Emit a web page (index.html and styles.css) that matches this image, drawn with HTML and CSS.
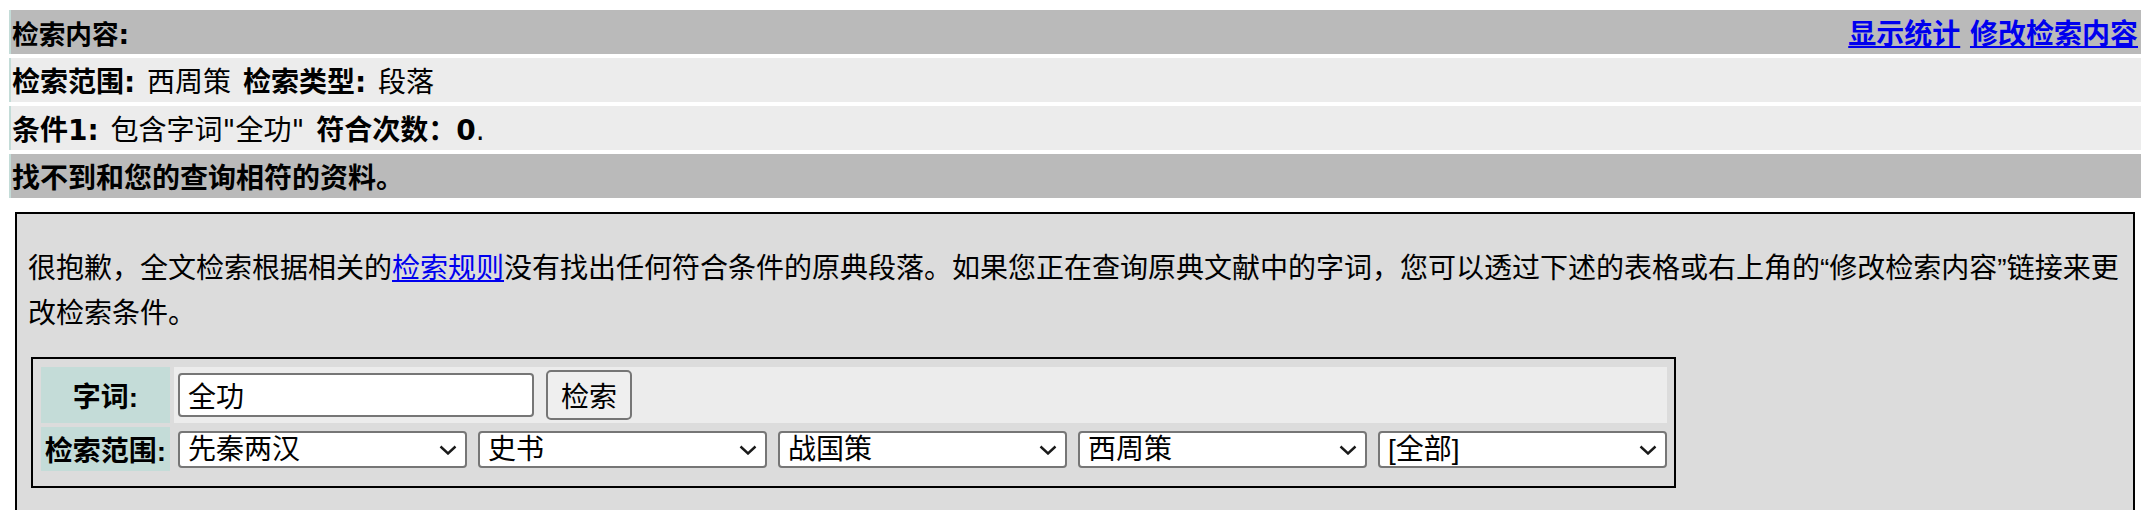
FILE: index.html
```html
<!DOCTYPE html>
<html lang="zh-CN">
<head>
<meta charset="utf-8">
<title>检索结果</title>
<link rel="stylesheet" href="styles.css">
</head>
<body>
<div class="page">
  <div class="bars">
    <div class="bar dark">
      <b class="title">检索内容:</b>
      <span class="links"><a href="#">显示统计</a> <a href="#">修改检索内容</a></span>
    </div>
    <div class="bar light"><span><b>检索范围:</b> 西周策 <b>检索类型:</b> 段落</span></div>
    <div class="bar light"><span><b>条件1:</b> 包含字词"全功" <b>符合次数：</b><b class="num">0</b>.</span></div>
    <div class="bar dark"><b>找不到和您的查询相符的资料。</b></div>
  </div>
  <div class="box">
    <p class="msg">很抱歉，全文检索根据相关的<a href="#">检索规则</a>没有找出任何符合条件的原典段落。如果您正在查询原典文献中的字词，您可以透过下述的表格或右上角的“修改检索内容”链接来更改检索条件。</p>
    <div class="form">
      <div class="label">字词:</div>
      <div class="cell first">
        <input class="word" type="text" value="全功">
        <button class="btn" type="button">检索</button>
      </div>
      <div class="label">检索范围:</div>
      <div class="cell second">
        <span class="sel"><select><option>先秦两汉</option></select><svg class="chev" viewBox="0 0 18 10" width="18" height="10"><polyline points="1.5,1.5 9,8.5 16.5,1.5"/></svg></span>
        <span class="sel"><select><option>史书</option></select><svg class="chev" viewBox="0 0 18 10" width="18" height="10"><polyline points="1.5,1.5 9,8.5 16.5,1.5"/></svg></span>
        <span class="sel"><select><option>战国策</option></select><svg class="chev" viewBox="0 0 18 10" width="18" height="10"><polyline points="1.5,1.5 9,8.5 16.5,1.5"/></svg></span>
        <span class="sel"><select><option>西周策</option></select><svg class="chev" viewBox="0 0 18 10" width="18" height="10"><polyline points="1.5,1.5 9,8.5 16.5,1.5"/></svg></span>
        <span class="sel"><select><option>[全部]</option></select><svg class="chev" viewBox="0 0 18 10" width="18" height="10"><polyline points="1.5,1.5 9,8.5 16.5,1.5"/></svg></span>
      </div>
    </div>
  </div>
</div>
</body>
</html>
```

FILE: styles.css
```css
html, body {
  margin: 0;
  padding: 0;
  background: #ffffff;
  overflow: hidden;
}

body {
  font-family: "Liberation Sans", "Noto Sans CJK SC", sans-serif;
  color: #000;
}

.page {
  padding: 10px 4px 0 9px;
}

.bars {
  display: flex;
  flex-direction: column;
  gap: 4px;
}

.bar {
  display: flex;
  align-items: center;
  height: 44px;
  border-left: 2px solid #c4dcd8;
  padding: 0 3px 0 1px;
  font-family: "DejaVu Sans", "Noto Sans CJK SC", sans-serif;
  font-size: 28px;
  white-space: nowrap;
}

.bar.dark {
  background: #bababa;
}

.bar.light {
  background: #ececec;
  word-spacing: 3px;
}

.bar .title {
  font-size: 26.67px;
}

.links {
  margin-left: auto;
  font-size: 28px;
  font-weight: bold;
}

a {
  color: #0000ee;
  text-decoration: underline;
}

.box {
  margin: 14px 6px 0 6px;
  border: 2px solid #000;
  background: #dcdcdc;
  min-height: 320px;
  padding-top: 32px;
}

.msg {
  margin: 0;
  padding: 0 4px 0 11px;
  font-size: 28px;
  line-height: 45px;
}

.form {
  margin: 21px 0 0 14px;
  width: 1645px;
  box-sizing: border-box;
  border: 2px solid #000;
  padding: 8px 8px 15px 8px;
  display: grid;
  grid-template-columns: 129px 1fr;
  grid-template-rows: 56px 44px;
  gap: 4px;
}

.label {
  background: #c4dcd8;
  font-size: 28px;
  font-weight: bold;
  display: flex;
  align-items: center;
  justify-content: center;
  white-space: nowrap;
}

.cell {
  display: flex;
  align-items: center;
  padding-left: 4px;
}

.cell.first {
  background: #ececec;
  gap: 12px;
}

.cell.second {
  gap: 11px;
}

.word {
  width: 356px;
  height: 44px;
  box-sizing: border-box;
  border: 2px solid #767676;
  border-radius: 4px;
  background: #fff;
  font-family: "Liberation Sans", "Noto Sans CJK SC", sans-serif;
  font-size: 28px;
  padding: 0 8px;
  color: #000;
  outline: none;
}

.btn {
  width: 86px;
  height: 50px;
  box-sizing: border-box;
  border: 2px solid #767676;
  border-radius: 5px;
  background: #efefef;
  font-family: "Liberation Sans", "Noto Sans CJK SC", sans-serif;
  font-size: 28px;
  color: #000;
  padding: 0;
}

.sel {
  position: relative;
  display: block;
  width: 289px;
  height: 37px;
}

.sel select {
  appearance: none;
  -webkit-appearance: none;
  width: 100%;
  height: 100%;
  box-sizing: border-box;
  border: 2px solid #767676;
  border-radius: 4px;
  background: #fff;
  font-family: "Liberation Sans", "Noto Sans CJK SC", sans-serif;
  font-size: 28px;
  line-height: 33px;
  padding: 0 30px 0 8px;
  color: #000;
}

.chev {
  position: absolute;
  right: 10px;
  top: 14px;
  fill: none;
  stroke: #1a1a1a;
  stroke-width: 2.4;
  pointer-events: none;
}
```
